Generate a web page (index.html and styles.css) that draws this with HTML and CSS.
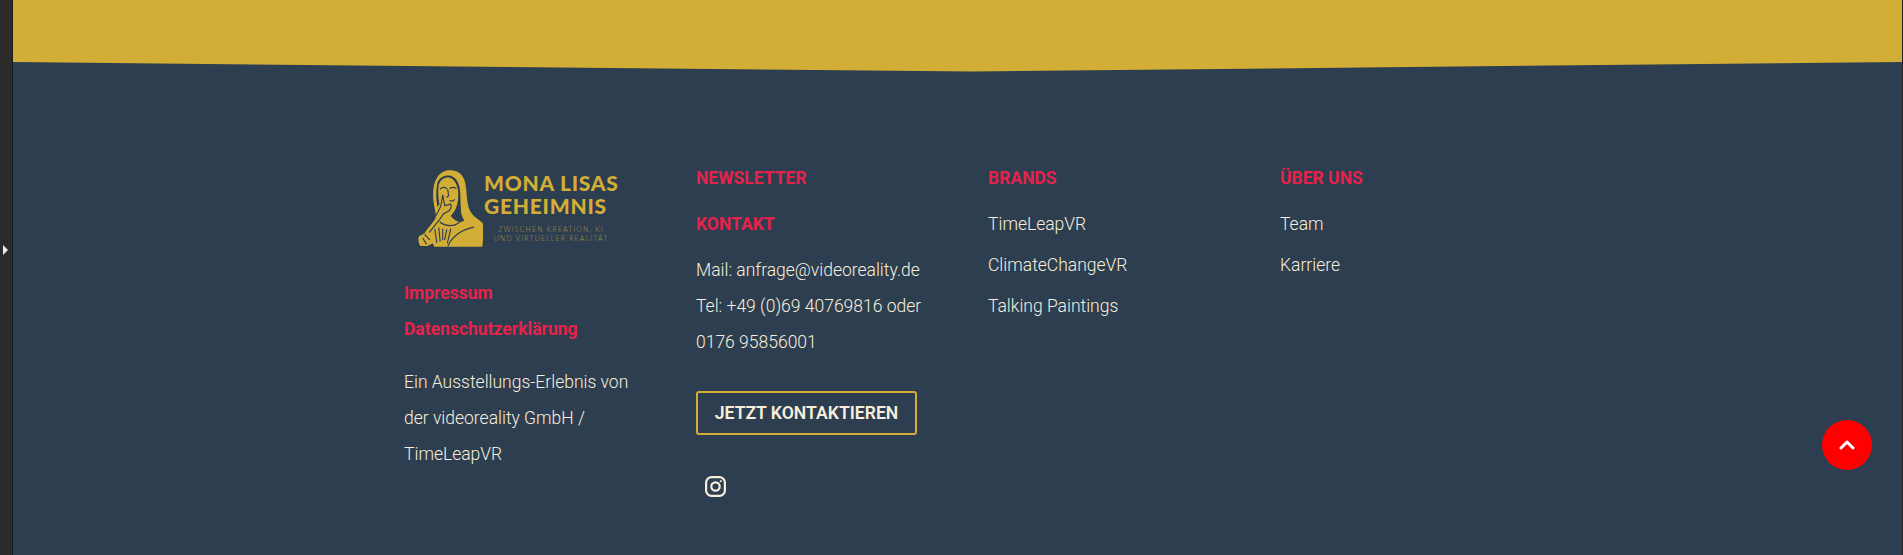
FILE: index.html
```html
<!DOCTYPE html>
<html lang="de">
<head>
<meta charset="utf-8">
<title>Mona Lisas Geheimnis</title>
<link rel="stylesheet" href="styles.css">
</head>
<body>
<div class="shell">
  <aside class="rail"><span class="rail-arrow"></span></aside>
  <main class="page">
    <div class="band">
      <svg class="wave" viewBox="0 0 1889 72" preserveAspectRatio="none"><path d="M0 0H1889V62L960 71.5L0 62Z" fill="#d3ae36"/></svg>
    </div>
    <footer class="footer">
      <section class="col">
        <div class="logo">
          <svg class="mona" viewBox="9 26 197 221" preserveAspectRatio="none">
            <path fill="#d3ae36" d="M100 27C125 24 146 36 152 62C157 85 156 108 161 128C165 146 176 158 192 168L205 178C208 200 207 225 204 246H58L54 236L38 244H16C10 236 9 224 12 216L28 208C36 196 48 184 60 168C66 160 62 150 60 138C56 122 53 100 56 78C60 50 76 30 100 27Z"/>
            <path fill="#2d3e50" d="M68 62C74 46 90 40 106 42C122 46 133 60 136 82C139 104 137 128 140 150C142 160 146 166 150 172L136 176C126 172 116 168 108 158L118 146C128 132 132 112 131 92C130 72 122 54 106 48C90 46 78 52 72 68C69 84 70 104 74 124L68 132C63 110 63 84 68 62Z"/>
            <path fill="none" stroke="#2d3e50" stroke-width="3.5" stroke-linecap="round" stroke-linejoin="round" d="M77 80C83 75 90 75 96 79M106 79C111 75 118 75 124 78M99 82L102 100L96 104M106 114C111 116 116 115 120 111"/>
            <path fill="none" stroke="#2d3e50" stroke-width="3.5" stroke-linecap="round" stroke-linejoin="round" d="M84 98L90 128L108 124C112 130 108 142 98 146L86 152L76 166L44 204M84 98L78 130L64 156"/>
            <path fill="none" stroke="#2d3e50" stroke-width="3.5" stroke-linecap="round" d="M76 176C92 188 118 190 134 176M60 196L66 234M72 192L76 230M84 196L84 226M96 198L90 226M108 196L98 236M100 244C112 218 140 198 178 190M30 212L44 226M24 222L34 238"/>
          </svg>
          <div class="logo-words">
            <div class="logo-title">MONA LISAS<br>GEHEIMNIS</div>
            <div class="logo-sub">ZWISCHEN KREATION, KI<br>UND VIRTUELLER REALITÄT</div>
          </div>
        </div>
        <a class="redlink">Impressum</a>
        <a class="redlink">Datenschutzerklärung</a>
        <p class="text note">Ein Ausstellungs-Erlebnis von der videoreality GmbH / TimeLeapVR</p>
      </section>
      <section class="col">
        <h3 class="head">NEWSLETTER</h3>
        <h3 class="head second">KONTAKT</h3>
        <p class="text contact">Mail: anfrage@videoreality.de<br>Tel: +49 (0)69 40769816 oder 0176 95856001</p>
        <a class="cta">JETZT KONTAKTIEREN</a>
        <svg class="insta" viewBox="0 0 21 21" fill="none" stroke="#f8eedb" stroke-width="2.2"><rect x="1.1" y="1.1" width="18.8" height="18.8" rx="5.5"/><circle cx="10.5" cy="10.5" r="4.2"/><circle cx="15.8" cy="5.2" r=".7" fill="#f8eedb" stroke-width="1"/></svg>
      </section>
      <section class="col">
        <h3 class="head">BRANDS</h3>
        <ul class="list"><li>TimeLeapVR</li><li>ClimateChangeVR</li><li>Talking Paintings</li></ul>
      </section>
      <section class="col">
        <h3 class="head">ÜBER UNS</h3>
        <ul class="list"><li>Team</li><li>Karriere</li></ul>
      </section>
    </footer>
  </main>
</div>
<a class="totop"><svg viewBox="0 0 16 10" fill="none" stroke="#fff" stroke-width="3" stroke-linecap="round" stroke-linejoin="round"><path d="M2 8l6-6 6 6"/></svg></a>
</body>
</html>
```
FILE: styles.css
```css
html,body{margin:0;padding:0;height:555px;overflow:hidden;background:#2d3e50}
body{font-family:Roboto,"Liberation Sans",sans-serif;color:#f8eedb}
.shell{display:flex;height:555px}
.rail{width:12px;flex:none;background:#2b2b2b;border-right:1px solid #1a1a1a;display:flex;align-items:center;padding-bottom:56px;box-sizing:content-box}
.rail-arrow{width:0;height:0;border-left:5px solid #eee;border-top:5px solid transparent;border-bottom:5px solid transparent;margin-left:3px}
.page{flex:1;background:#2d3e50;min-width:0;border-right:1px solid #222}
.band{height:72px}
.wave{display:block;width:100%;height:72px}
.footer{display:grid;grid-template-columns:repeat(4,292px);padding:88px 0 0 391px}
.col{display:flex;flex-direction:column;align-items:flex-start}
.logo{display:flex;align-items:flex-start;height:77px;margin:10px 0 28px 14px}
.mona{width:65px;height:77px;flex:none}
.logo-words{margin-left:1px;width:134px;padding-top:2px}
.logo-title{font:900 21px/22.5px Lato,sans-serif;letter-spacing:.75px;color:#d3ae36;white-space:nowrap}
.logo-sub{font:300 7px/8.5px Lato,sans-serif;letter-spacing:1.15px;color:#a89340;margin-top:8px;text-align:center;white-space:nowrap}
.redlink{font-weight:700;font-size:17.5px;line-height:36px;color:#e6224a}
.text{margin:0;font-weight:300;font-size:17.5px;line-height:36px}
.note{width:230px;margin-top:17px}
.head{margin:0;font-weight:700;font-size:17.5px;line-height:36px;color:#e6224a}
.head.second{margin-top:10px}
.contact{width:240px;margin-top:10px}
.cta{box-sizing:border-box;width:221px;height:44px;margin-top:31px;border:2px solid #d3ae36;border-radius:3px;display:flex;align-items:center;justify-content:center;font-weight:600;font-size:17.6px}
.insta{width:21px;height:21px;margin:41px 0 0 9px}
.list{list-style:none;margin:8px 0 0;padding:0;font-weight:300;font-size:17.5px;line-height:41px}
.totop{position:fixed;left:1822px;top:420px;width:50px;height:50px;border-radius:50%;background:#f00;display:flex;align-items:center;justify-content:center}
.totop svg{width:16px;height:10px}
```
